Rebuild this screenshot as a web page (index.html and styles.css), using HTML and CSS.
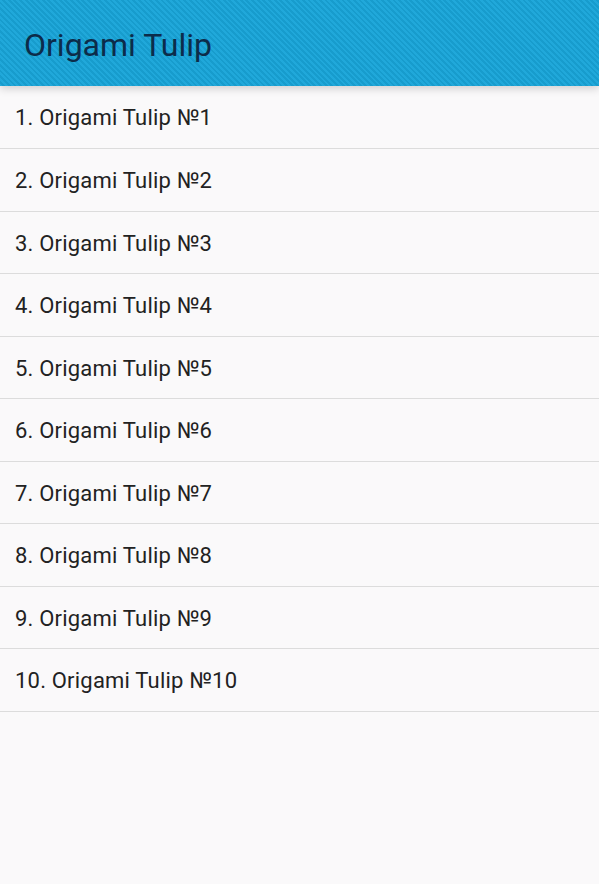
FILE: index.html
```html
<!DOCTYPE html>
<html>
<head>
  <title>Origami Tulip</title>
  <link rel="stylesheet" href="styles.css">
</head>
<body>
  <div class="action-bar">
    <h1>Origami Tulip</h1>
  </div>
  <ul class="list">
    <li>1. Origami Tulip №1</li>
    <li>2. Origami Tulip №2</li>
    <li>3. Origami Tulip №3</li>
    <li>4. Origami Tulip №4</li>
    <li>5. Origami Tulip №5</li>
    <li>6. Origami Tulip №6</li>
    <li>7. Origami Tulip №7</li>
    <li>8. Origami Tulip №8</li>
    <li>9. Origami Tulip №9</li>
    <li>10. Origami Tulip №10</li>
  </ul>
</body>
</html>
```

FILE: styles.css
```css
html {
  background: #faf9fa;
}
body {
  margin: 0;
  font-family: Roboto, "Noto Sans", sans-serif;
}

/* ACTION BAR */
.action-bar {
  position: relative;
  height: 86px;
  display: flex;
  align-items: center;
  padding-left: 24px;
  background-color: #1ca5d8;
  background-image: repeating-linear-gradient(45deg, #20a8da 0, #20a8da 2px, #179ccd 2px, #179ccd 4px);
  box-shadow: 0 3px 8px rgba(0, 0, 0, 0.16);
  z-index: 1;
}
.action-bar h1 {
  margin: 0;
  font-size: 32px;
  font-weight: normal;
  color: #0c2c4a;
  padding-top: 3px;
}

/* LIST */
.list {
  list-style: none;
  margin: 0;
  padding: 0;
}
.list li {
  height: 61.5px;
  line-height: 63px;
  padding-left: 15px;
  font-size: 22px;
  letter-spacing: 0.2px;
  color: #222;
  border-bottom: 1px solid #dcdcdc;
}
.list li:first-child {
  height: 62px;
}
```
